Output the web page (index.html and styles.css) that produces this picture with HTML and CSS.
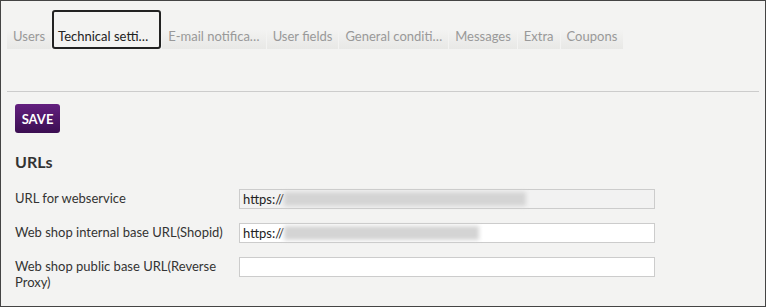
FILE: index.html
```html
<!DOCTYPE html>
<html lang="en">

<head>
    <meta charset="UTF-8">
    <title>Shop settings</title>
    <link rel="stylesheet" href="styles.css">
</head>

<body>
    <div class="window">
        <div class="tabs">
            <div class="tab">Users</div>
            <div class="tab active">Technical setti…</div>
            <div class="tab">E-mail notifica…</div>
            <div class="tab">User fields</div>
            <div class="tab">General conditi…</div>
            <div class="tab">Messages</div>
            <div class="tab">Extra</div>
            <div class="tab">Coupons</div>
        </div>
        <div class="rule"></div>

        <div class="content">
            <button class="save-button">SAVE</button>
            <h2 class="section-title">URLs</h2>

            <div class="form">
                <label class="field-label">URL for webservice</label>
                <div class="field readonly">https://<span class="blur wide"></span></div>

                <label class="field-label">Web shop internal base URL(Shopid)</label>
                <div class="field">https://<span class="blur"></span></div>

                <label class="field-label">Web shop public base URL(Reverse Proxy)</label>
                <div class="field"></div>
            </div>
        </div>
    </div>
</body>

</html>
```

FILE: styles.css
```css
body,
html {
    margin: 0;
    padding: 0;
    font-family: Lato, "Open Sans", sans-serif;
    background-color: #f3f3f2;
}

.window {
    box-sizing: border-box;
    width: 766px;
    height: 307px;
    border: 1px solid #444;
    background: #f3f3f2;
    padding: 9px 6px 0 6px;
    overflow: hidden;
}

.tabs {
    display: flex;
    gap: 1px;
    height: 39px;
}

.tab {
    display: flex;
    align-items: flex-end;
    padding: 0 6px 5px 6px;
    font-size: 13px;
    color: #999;
    background: linear-gradient(to bottom, rgba(232, 232, 230, 0) 50%, #e8e8e6 100%);
    white-space: nowrap;
}

.tab.active {
    color: #222;
    background: transparent;
    border: 2px solid #222;
    border-radius: 3px;
    padding: 0 11px 3px 4px;
}

.rule {
    margin-top: 42px;
    border-top: 1px solid #ccc;
}

.content {
    padding: 0 8px;
}

.save-button {
    display: block;
    margin-top: 12px;
    width: 45px;
    height: 29px;
    padding: 0;
    border: none;
    border-radius: 3px;
    background: linear-gradient(to bottom, #63207f, #3b0e52);
    color: white;
    font-family: inherit;
    font-size: 13px;
    font-weight: bold;
}

.section-title {
    margin: 19px 0 0 0;
    font-size: 16px;
    font-weight: bold;
    color: #333;
    line-height: 20px;
}

.form {
    display: grid;
    grid-template-columns: 224px 416px;
    row-gap: 14px;
    margin-top: 17px;
}

.field-label {
    font-size: 13px;
    line-height: 16px;
    color: #333;
    padding-top: 1px;
}

.field {
    box-sizing: border-box;
    height: 20px;
    border: 1px solid #ccc;
    background: white;
    font-size: 13px;
    line-height: 18px;
    color: #222;
    padding-left: 3px;
    display: flex;
    align-items: center;
}

.field.readonly {
    background: #f2f2f2;
}

.blur {
    display: inline-block;
    width: 195px;
    height: 14px;
    background: #d4d4d4;
    filter: blur(2px);
}

.blur.wide {
    width: 242px;
}
```
